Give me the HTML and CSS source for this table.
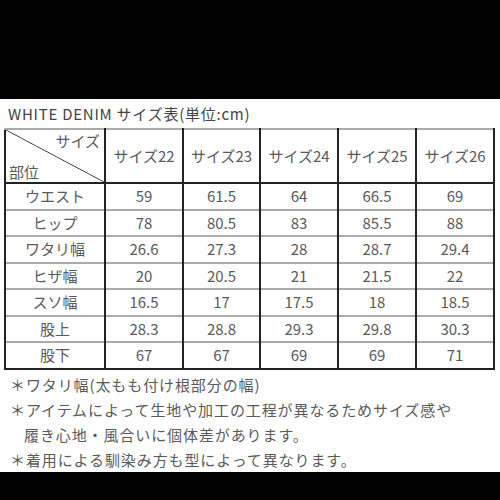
FILE: index.html
```html
<!DOCTYPE html>
<html lang="ja">
<head>
<meta charset="utf-8">
<link rel="stylesheet" href="styles.css">
</head>
<body>
<div class="page">
  <div class="bar-top"></div>
  <div class="content">
    <div class="title">WHITE DENIM サイズ表(単位:cm)</div>
    <table class="size">
      <colgroup>
        <col class="c-label"><col class="c1"><col class="c2"><col class="c3"><col class="c4"><col class="c5">
      </colgroup>
      <thead>
        <tr class="head">
          <th class="corner"><span class="c-size">サイズ</span><span class="c-part">部位</span></th>
          <th>サイズ22</th><th>サイズ23</th><th>サイズ24</th><th>サイズ25</th><th>サイズ26</th>
        </tr>
      </thead>
      <tbody>
        <tr><td>ウエスト</td><td>59</td><td>61.5</td><td>64</td><td>66.5</td><td>69</td></tr>
        <tr><td>ヒップ</td><td>78</td><td>80.5</td><td>83</td><td>85.5</td><td>88</td></tr>
        <tr><td>ワタリ幅</td><td>26.6</td><td>27.3</td><td>28</td><td>28.7</td><td>29.4</td></tr>
        <tr><td>ヒザ幅</td><td>20</td><td>20.5</td><td>21</td><td>21.5</td><td>22</td></tr>
        <tr><td>スソ幅</td><td>16.5</td><td>17</td><td>17.5</td><td>18</td><td>18.5</td></tr>
        <tr><td>股上</td><td>28.3</td><td>28.8</td><td>29.3</td><td>29.8</td><td>30.3</td></tr>
        <tr><td>股下</td><td>67</td><td>67</td><td>69</td><td>69</td><td>71</td></tr>
      </tbody>
    </table>
    <div class="notes">
      <p>＊ワタリ幅(太もも付け根部分の幅)</p>
      <p>＊アイテムによって生地や加工の工程が異なるためサイズ感や</p>
      <p class="indent">履き心地・風合いに個体差があります。</p>
      <p>＊着用による馴染み方も型によって異なります。</p>
    </div>
  </div>
  <div class="bar-bottom"></div>
</div>
</body>
</html>
```
FILE: styles.css
```css
html, body {
  margin: 0;
  padding: 0;
  background: #fff;
}
.page {
  width: 500px;
  height: 500px;
  display: flex;
  flex-direction: column;
  overflow: hidden;
  font-family: "Noto Sans CJK JP", "Noto Sans", sans-serif;
  color: #5a5a5a;
}
.bar-top {
  height: 99px;
  background: #000;
  flex: none;
}
.content {
  flex: none;
  padding: 0 0 0 4px;
}
.title {
  font-size: 15px;
  line-height: 20px;
  padding: 5px 0 0 4px;
  height: 24px;
  color: #444;
  letter-spacing: 0.75px;
}
.size {
  border-collapse: collapse;
  table-layout: fixed;
  width: 489px;
  border: 2px solid #222;
  font-size: 15px;
}
.c-label { width: 100px; }
.c1 { width: 78px; }
.c2 { width: 77px; }
.c3 { width: 78px; }
.c4 { width: 78px; }
.c5 { width: 78px; }
.size th, .size td {
  border-left: 2px solid #222;
  border-right: 2px solid #222;
  border-top: 2px solid #aaa;
  padding: 0;
  text-align: center;
  font-weight: normal;
  line-height: 20px;
}
.size tbody tr {
  height: 26.5px;
}
.size thead th {
  height: 52px;
  border-bottom: 2px solid #222;
}
.corner {
  background: linear-gradient(to top right, transparent calc(50% - 0.8px), #333 50%, transparent calc(50% + 0.8px));
}
.c-size, .c-part {
  display: block;
  line-height: 20px;
}
.c-size {
  text-align: right;
  padding-right: 4px;
  margin-bottom: 11px;
}
.c-part {
  text-align: left;
  padding-left: 3px;
}
.notes {
  font-size: 15px;
  line-height: 25px;
  letter-spacing: 0.9px;
  padding: 2px 0 0 6px;
}
.notes p {
  margin: 0;
}
.notes .indent {
  padding-left: 14px;
}
.bar-bottom {
  flex: 1;
  background: #000;
}
```
